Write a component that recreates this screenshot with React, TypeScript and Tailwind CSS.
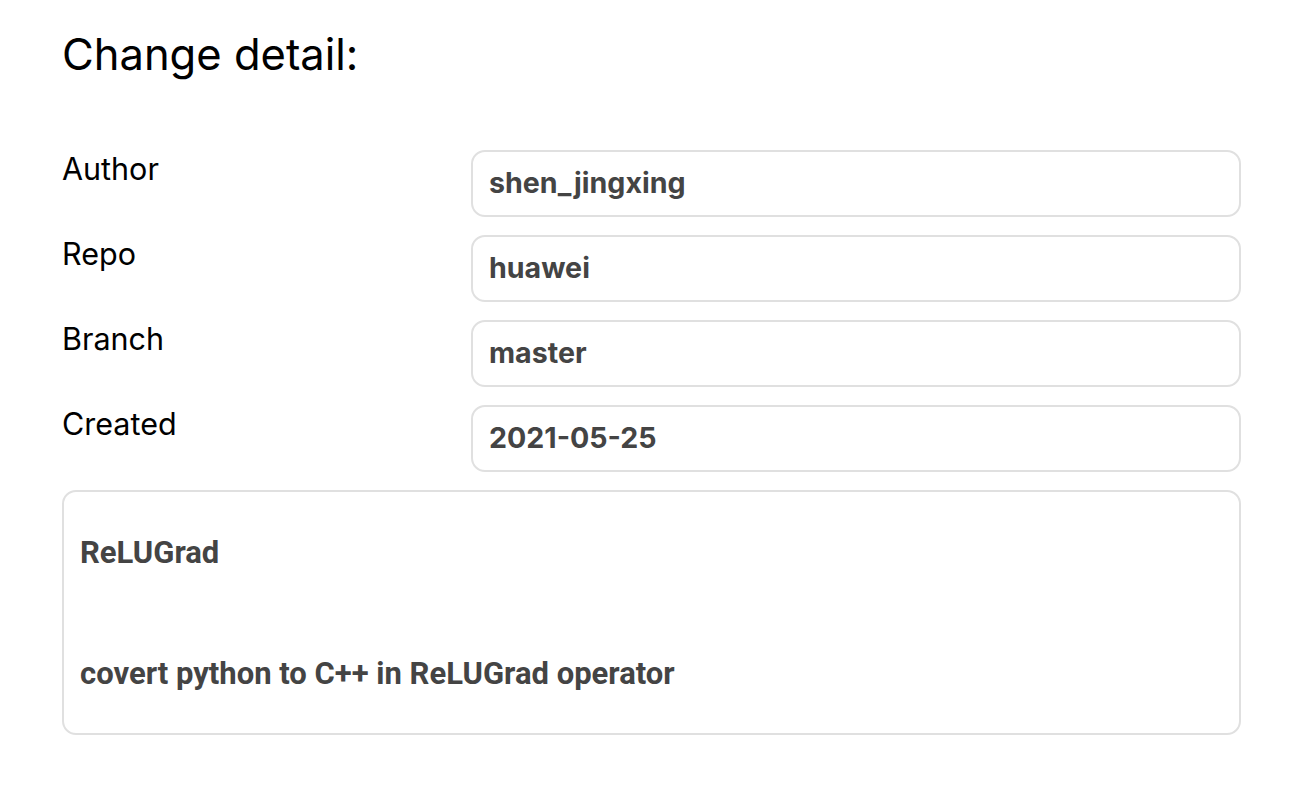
import React from 'react';

const fields = [
  { label: 'Author', value: 'shen_jingxing' },
  { label: 'Repo', value: 'huawei' },
  { label: 'Branch', value: 'master' },
  { label: 'Created', value: '2021-05-25' },
];

export default function App() {
  return (
    <div
      className="min-h-screen bg-white pl-[62px] pr-[63px] pt-[28px]"
      style={{ fontFamily: 'Inter, "Liberation Sans", sans-serif' }}
    >
      {/* Title */}
      <h1 className="text-[43.5px] leading-[52px] text-black font-normal">Change detail:</h1>

      <div className="mt-[70px] flex flex-col gap-[18px]">
        {fields.map((f) => (
          <div key={f.label} className="flex items-start">
            <div className="w-[409px] shrink-0 text-[30.5px] leading-[38px] text-black">{f.label}</div>
            <div className="flex-1 h-[67px] rounded-[14px] border-2 border-[#e0e0e0] px-[16px] flex items-center text-[28.6px] font-bold text-[#444444]">
              {f.value}
            </div>
          </div>
        ))}

        {/* Description */}
        <div
          className="rounded-[14px] border-2 border-[#e0e0e0] px-[16px] pt-[43px] pb-[41px] text-[31px] font-bold text-[#444444] leading-[36px] flex flex-col gap-[85px]"
          style={{ fontFamily: 'Roboto, Inter, sans-serif' }}
        >
          <p>ReLUGrad</p>
          <p>covert python to C++ in ReLUGrad operator</p>
        </div>
      </div>
    </div>
  );
}
